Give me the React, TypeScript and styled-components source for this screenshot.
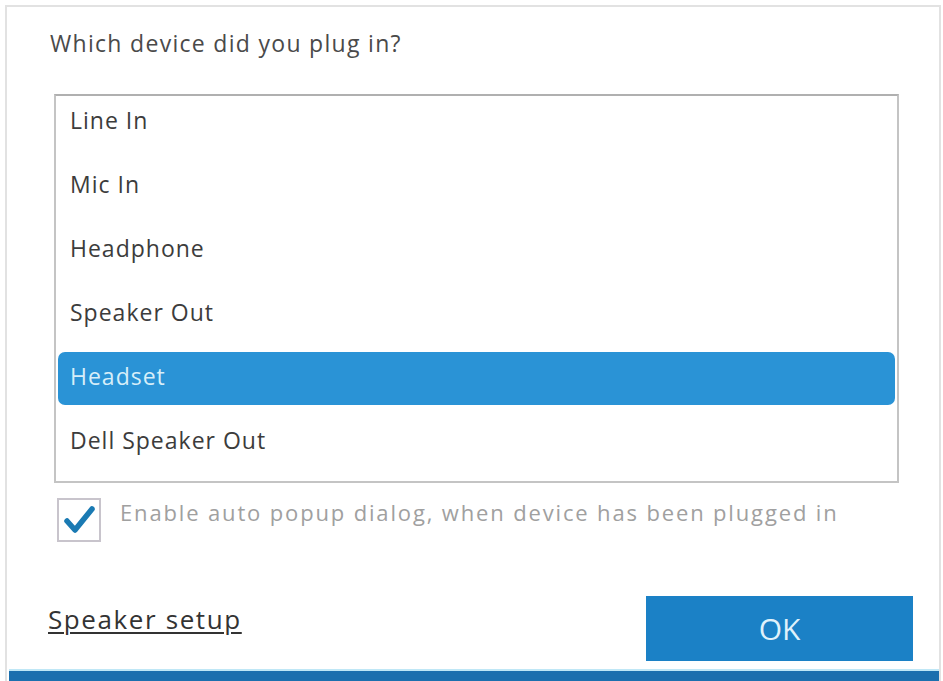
import React from "react";
import styled, { createGlobalStyle } from "styled-components";

const Global = createGlobalStyle`
  html, body {
    margin: 0;
    padding: 0;
    background: #ffffff;
  }
  body {
    font-family: "Open Sans", "Noto Sans", sans-serif;
    overflow: hidden;
  }
`;

const Window = styled.div`
  box-sizing: border-box;
  margin: 5px 0 0 5px;
  width: 936px;
  height: 676px;
  border: 2px solid #e2e2e2;
  border-bottom: none;
  background: #ffffff;
  display: flex;
  flex-direction: column;
`;

const Title = styled.div`
  padding: 21px 0 0 43px;
  height: 87px;
  box-sizing: border-box;
  font-size: 23px;
  letter-spacing: 1.3px;
  color: #4a4a4a;
  line-height: 30px;
`;

const ListBox = styled.div`
  box-sizing: border-box;
  margin-left: 47px;
  width: 845px;
  height: 389px;
  border: 2px solid #c4c4c4;
  border-top-color: #b0b0b0;
  padding: 0 2px;
  display: flex;
  flex-direction: column;
  gap: 11px;
`;

const Row = styled.div<{ $selected?: boolean }>`
  flex: 0 0 53px;
  box-sizing: border-box;
  display: flex;
  align-items: center;
  padding: 0 0 6px 12px;
  border-radius: 7px;
  font-size: 23px;
  letter-spacing: 1px;
  color: ${(p) => (p.$selected ? "#d6eef9" : "#3c3c3c")};
  background: ${(p) => (p.$selected ? "#2a93d6" : "transparent")};
`;

const CheckRow = styled.label`
  display: flex;
  align-items: flex-start;
  margin: 15px 0 0 50px;
  gap: 19px;
`;

const Box = styled.span`
  box-sizing: border-box;
  width: 44px;
  height: 44px;
  border: 2px solid #c8c4cc;
  display: flex;
  align-items: center;
  justify-content: center;
  flex: 0 0 auto;
`;

const CheckLabel = styled.span`
  font-size: 22px;
  letter-spacing: 1.85px;
  color: #a0a0a0;
  line-height: 28px;
`;

const Footer = styled.div`
  margin-top: auto;
  display: flex;
  align-items: center;
  justify-content: space-between;
  padding: 0 26px 8px 41px;
`;

const SetupLink = styled.a`
  font-size: 26px;
  letter-spacing: 1.6px;
  color: #333333;
  text-decoration: underline;
  text-decoration-thickness: 2px;
  text-underline-offset: 3px;
  cursor: pointer;
  margin-top: -20px;
`;

const OkButton = styled.button`
  width: 267px;
  height: 65px;
  border: none;
  background: #1b81c6;
  color: #dff1fb;
  font-family: inherit;
  font-size: 30px;
  padding: 0;
  cursor: pointer;
`;

const StatusBar = styled.div`
  height: 12px;
  margin: 0 0 0 2px;
  background: #1b6fae;
  border-top: 2px solid #bfe7f6;
  box-sizing: border-box;
`;

const devices = [
  "Line In",
  "Mic In",
  "Headphone",
  "Speaker Out",
  "Headset",
  "Dell Speaker Out",
];

export default function App() {
  const [selected, setSelected] = React.useState(4);
  const [auto, setAuto] = React.useState(true);
  return (
    <>
      <Global />
      <Window>
        <Title>Which device did you plug in?</Title>
        <ListBox>
          {devices.map((d, i) => (
            <Row key={d} $selected={i === selected} onClick={() => setSelected(i)}>
              {d}
            </Row>
          ))}
        </ListBox>
        <CheckRow onClick={() => setAuto(!auto)}>
          <Box>
            {auto && (
              <svg width="32" height="30" viewBox="0 0 32 30">
                <path
                  d="M4 16 L12 25 L29 4"
                  fill="none"
                  stroke="#1a7ab3"
                  strokeWidth="5.5"
                  strokeLinecap="round"
                  strokeLinejoin="round"
                />
              </svg>
            )}
          </Box>
          <CheckLabel>Enable auto popup dialog, when device has been plugged in</CheckLabel>
        </CheckRow>
        <Footer>
          <SetupLink>Speaker setup</SetupLink>
          <OkButton>OK</OkButton>
        </Footer>
        <StatusBar />
      </Window>
    </>
  );
}
